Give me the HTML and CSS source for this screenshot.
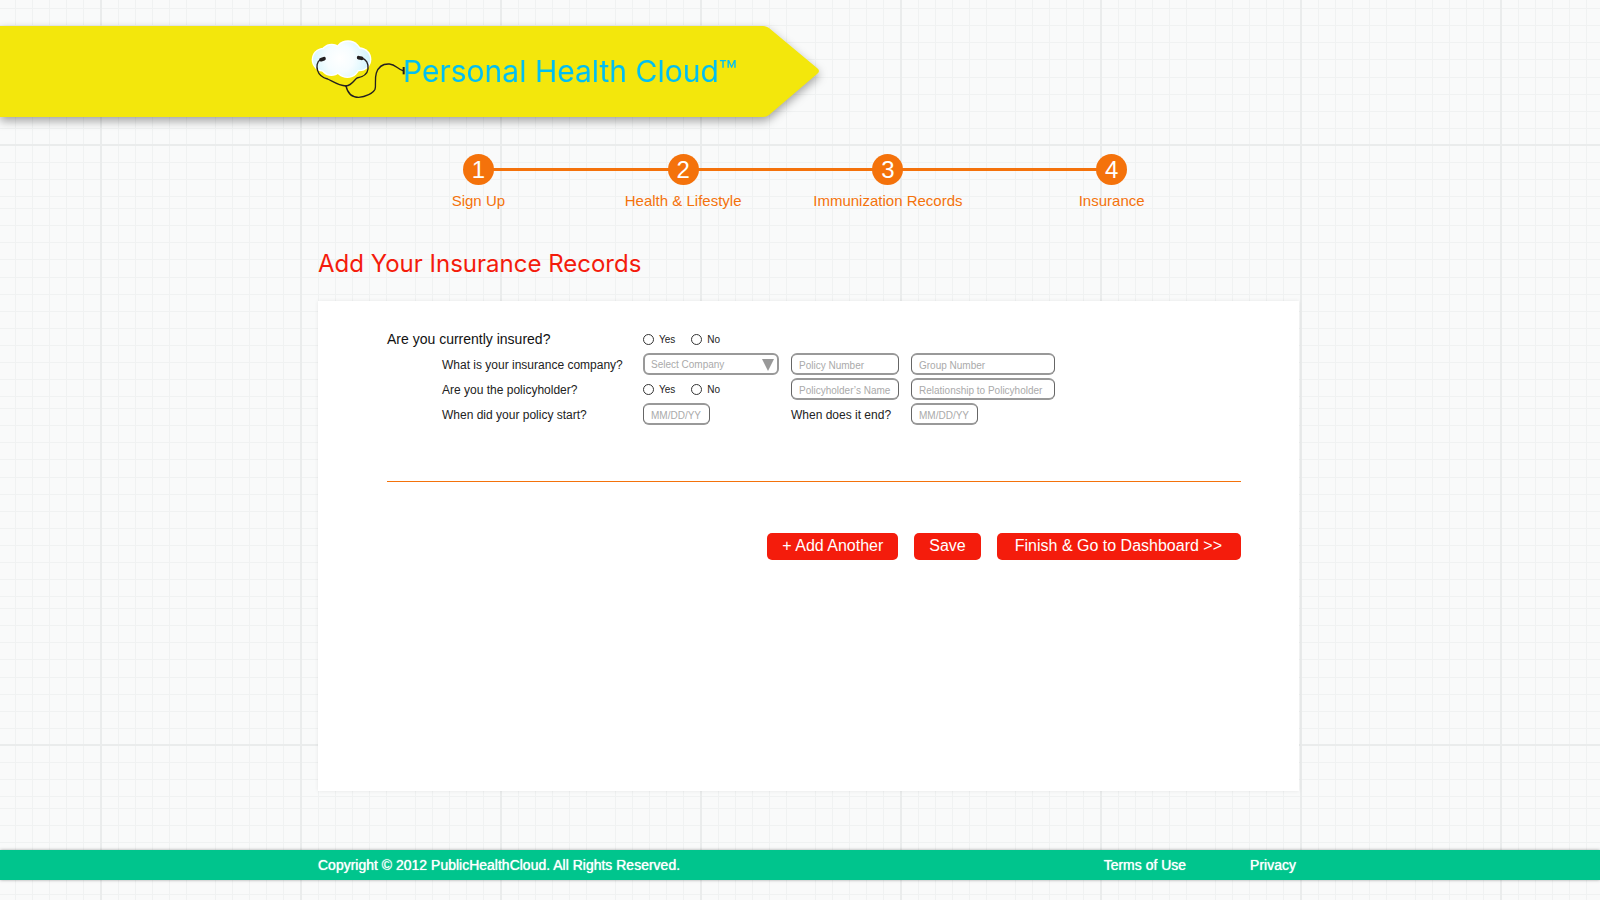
FILE: index.html
```html
<!DOCTYPE html>
<html lang="en">
<head>
<meta charset="utf-8">
<title>Personal Health Cloud</title>
<link rel="stylesheet" href="styles.css">
</head>
<body>
<header class="banner">
  <div class="banner-body">
    <svg class="logo" viewBox="60 54 279 186" aria-hidden="true">
      <defs>
        <radialGradient id="cloud" gradientUnits="userSpaceOnUse" cx="150" cy="115" r="90">
          <stop offset="0" stop-color="#fff"/>
          <stop offset="0.45" stop-color="#f6fdff"/>
          <stop offset="1" stop-color="#d2f4fc"/>
        </radialGradient>
      </defs>
      <g fill="#fff">
        <circle cx="101" cy="119" r="36"/><circle cx="125" cy="106" r="35"/><circle cx="174" cy="103" r="42"/><circle cx="208" cy="118" r="36"/><circle cx="124" cy="134" r="34"/><circle cx="172" cy="135" r="39"/>
      </g>
      <g fill="url(#cloud)">
        <circle cx="101" cy="119" r="32"/><circle cx="125" cy="106" r="31"/><circle cx="174" cy="103" r="38"/><circle cx="208" cy="118" r="32"/><circle cx="124" cy="134" r="30"/><circle cx="172" cy="135" r="35"/>
      </g>
      <g fill="none" stroke="#231f20" stroke-width="4" stroke-linecap="round">
        <path d="M92 119C80 124 79 140 83 152C87 166 97 173 113 177C128 184 146 197 168 198"/>
        <path d="M214 114C229 117 236 131 234 147C232 163 219 171 201 174C192 180 186 196 168 198"/>
        <path d="M168 198C172 216 182 232 206 232C226 231 250 220 255 208C259 196 253 178 259 159C265 141 280 131 298 132C317 133 323 148 339 152"/>
        <path d="M93 119L102 116M206 113L215 115" stroke-width="11"/>
        <path d="M341 141V163" stroke-width="6" stroke-linecap="butt"/>
      </g>
    </svg>
    <span class="brand">Personal Health Cloud™</span>
  </div>
  <svg class="banner-tip" viewBox="0 0 56 91" aria-hidden="true"><path d="M0 0C3 0 4 1 6 2L54 42Q58 45 54 48L6 89C4 90 3 91 0 91Z" fill="#f3e70c"/></svg>
</header>
<main class="page">
  <ol class="steps">
    <li class="step"><span class="step-number">1</span><span class="step-name">Sign Up</span></li>
    <li class="step"><span class="step-number">2</span><span class="step-name">Health &amp; Lifestyle</span></li>
    <li class="step"><span class="step-number">3</span><span class="step-name">Immunization Records</span></li>
    <li class="step"><span class="step-number">4</span><span class="step-name">Insurance</span></li>
  </ol>
  <h1 class="title">Add Your Insurance Records</h1>
  <form class="panel">
    <div class="fields">
      <span class="question" id="q-insured">Are you currently insured?</span>
      <div class="choices" role="radiogroup" aria-labelledby="q-insured">
        <label class="choice"><input class="radio" type="radio" name="insured">Yes</label>
        <label class="choice"><input class="radio" type="radio" name="insured">No</label>
      </div>
      <label class="sub" for="company">What is your insurance company?</label>
      <div class="select-wrap">
        <select class="control select" id="company"><option>Select Company</option></select>
        <svg class="arrow" viewBox="0 0 12 12" aria-hidden="true"><path d="M0 0H12L6 12Z" fill="#999"/></svg>
      </div>
      <input class="control" type="text" placeholder="Policy Number" aria-label="Policy Number">
      <input class="control" type="text" placeholder="Group Number" aria-label="Group Number">
      <span class="sub" id="q-holder">Are you the policyholder?</span>
      <div class="choices" role="radiogroup" aria-labelledby="q-holder">
        <label class="choice"><input class="radio" type="radio" name="holder">Yes</label>
        <label class="choice"><input class="radio" type="radio" name="holder">No</label>
      </div>
      <input class="control" type="text" placeholder="Policyholder’s Name" aria-label="Policyholder’s Name">
      <input class="control" type="text" placeholder="Relationship to Policyholder" aria-label="Relationship to Policyholder">
      <label class="sub" for="start">When did your policy start?</label>
      <input class="control date" id="start" type="text" placeholder="MM/DD/YY">
      <label class="end-label" for="end">When does it end?</label>
      <input class="control date" id="end" type="text" placeholder="MM/DD/YY">
    </div>
    <hr class="divider">
    <div class="actions">
      <button class="button" type="button">+ Add Another</button>
      <button class="button" type="button">Save</button>
      <button class="button wide" type="submit">Finish &amp; Go to Dashboard &gt;&gt;</button>
    </div>
  </form>
</main>
<footer class="footer">
  <span>Copyright © 2012 PublicHealthCloud. All Rights Reserved.</span>
  <nav class="footer-links"><a href="#">Terms of Use</a><a href="#">Privacy</a></nav>
</footer>
</body>
</html>
```
FILE: styles.css
```css
:root {
  --left: max(16px, calc(50% - 482px));
  --right: max(16px, calc(50% - 499px));
  --minor: #f0f2f2;
  --major: #eaecec;
}

* { box-sizing: border-box; }

body {
  margin: 0;
  min-height: 100vh;
  padding: 26px 0 20px;
  display: flex;
  flex-direction: column;
  font-family: "Liberation Sans", Arial, sans-serif;
  color: #222;
  background-color: #f9fafa;
  background-image:
    linear-gradient(90deg, transparent 100px, var(--major) 100px 102px, transparent 102px),
    linear-gradient(transparent 144px, var(--major) 144px 146px, transparent 146px 345px, var(--minor) 345px 346px, transparent 346px 545px, var(--minor) 545px 546px, transparent 546px),
    linear-gradient(90deg, transparent 15px, var(--minor) 15px 16px, transparent 16px 32px, var(--minor) 32px 33px, transparent 33px 49px, var(--minor) 49px 50px, transparent 50px 66px, var(--minor) 66px 67px, transparent 67px 83px, var(--minor) 83px 84px, transparent 84px 118px, var(--minor) 118px 119px, transparent 119px 135px, var(--minor) 135px 136px, transparent 136px 152px, var(--minor) 152px 153px, transparent 153px 169px, var(--minor) 169px 170px, transparent 170px 186px, var(--minor) 186px 187px, transparent 187px),
    linear-gradient(transparent 8px, var(--minor) 8px 9px, transparent 9px 25px, var(--minor) 25px 26px, transparent 26px 42px, var(--minor) 42px 43px, transparent 43px 59px, var(--minor) 59px 60px, transparent 60px 77px, var(--minor) 77px 78px, transparent 78px 94px, var(--minor) 94px 95px, transparent 95px 111px, var(--minor) 111px 112px, transparent 112px 128px, var(--minor) 128px 129px, transparent 129px 162px, var(--minor) 162px 163px, transparent 163px 179px, var(--minor) 179px 180px, transparent 180px 196px, var(--minor) 196px 197px, transparent 197px);
  background-size: 200px 200px, 200px 600px, 200px 200px, 200px 200px;
}

.banner {
  display: flex;
  filter: drop-shadow(0 4px 5px rgba(0, 0, 0, 0.35));
}

.banner-body {
  display: flex;
  width: calc(50% - 37px);
  min-width: 450px;
  height: 91px;
  padding-top: 12px;
  padding-left: calc(50vw - 490px);
  background: #f3e70c;
}

.banner-tip { width: 56px; height: 91px; }

.logo {
  flex: none;
  width: 93px;
  height: 62px;
  overflow: visible;
}

.brand {
  position: relative;
  font: 30px/66px Inter, sans-serif;
  color: #00bff3;
  white-space: nowrap;
}

.page {
  display: flex;
  flex: 1;
  flex-direction: column;
  padding: 37px var(--right) 0 var(--left);
}

.steps {
  display: grid;
  grid-template-columns: 205fr 205fr 205fr 243fr;
  margin: 0 66px 0 58px;
  padding: 0;
  list-style: none;
  color: #f4720b;
}

.step {
  position: relative;
  display: flex;
  flex-direction: column;
  align-items: center;
  gap: 6px;
}

.step::before {
  content: "";
  position: absolute;
  top: 14px;
  left: 0;
  right: 0;
  height: 3px;
  background: #f4720b;
}

.step:first-child::before { left: 50%; }
.step:last-child::before { right: 50%; }

.step-number {
  position: relative;
  width: 31px;
  height: 31px;
  border-radius: 50%;
  background: #f4720b;
  color: #fff;
  font-size: 24px;
  line-height: 31px;
  text-align: center;
}

.step-name {
  font-size: 15px;
  line-height: 20px;
  white-space: nowrap;
}

.title {
  margin: 38px 0 22px;
  font: 24px/30px Inter, sans-serif;
  color: #f41c0c;
}

.panel {
  min-height: 490px;
  padding: 27px 58px 40px 69px;
  background: #fff;
  box-shadow: 0 0 4px rgba(0, 0, 0, 0.08);
}

.fields {
  display: grid;
  grid-template-columns: 244px 136px 108px 144px;
  grid-auto-rows: 22px;
  gap: 3px 12px;
  align-items: center;
}

.question {
  font-size: 14px;
  color: #111;
}

.sub {
  padding-top: 1px;
  padding-left: 55px;
  font-size: 12px;
  white-space: nowrap;
}

.end-label {
  padding-top: 1px;
  font-size: 12px;
  white-space: nowrap;
}

.choices {
  display: flex;
  gap: 16px;
}

.choices:nth-child(2) { grid-column: 2 / -1; }

.choice {
  display: flex;
  align-items: center;
  gap: 5px;
  font-size: 10px;
}

.radio {
  appearance: none;
  width: 11px;
  height: 11px;
  margin: 0;
  border: 1px solid #333;
  border-radius: 50%;
}

.radio:checked { background: #333; }

.control {
  width: 100%;
  height: 22px;
  padding: 2px 7px 0;
  border: 2px solid #999;
  border-right: 1px solid #666;
  border-left: 1px solid #666;
  border-radius: 6px;
  background: #fff;
  font: 10px "Liberation Sans", Arial, sans-serif;
  color: #222;
}

.control::placeholder { color: #aaa; opacity: 1; }

.date { width: 67px; }

.select-wrap { position: relative; height: 22px; }

.select {
  appearance: none;
  padding: 0 6px;
  border: 2px solid #999;
  color: #aaa;
}

.arrow {
  position: absolute;
  top: 6px;
  right: 5px;
  width: 12px;
  height: 12px;
  pointer-events: none;
}

.divider {
  width: 100%;
  height: 1px;
  margin: 56px 0 51px;
  border: 0;
  background: #f4720b;
}

.actions {
  display: flex;
  justify-content: flex-end;
  gap: 16px;
}

.button {
  height: 27px;
  padding: 0 15px 2px;
  border: 0;
  border-radius: 5px;
  background: #f41c0c;
  color: #fff;
  font: 16px "Liberation Sans", Arial, sans-serif;
}

.wide { padding: 0 19px 2px 18px; }

.footer {
  display: flex;
  justify-content: space-between;
  padding: 0 var(--right) 0 var(--left);
  background: #00c58d;
  box-shadow: 0 0 3px rgba(0, 0, 0, 0.35);
  color: #fff;
  font-size: 14px;
  line-height: 30px;
  text-shadow: 0 0 1px #fff;
}

.footer-links { display: flex; gap: 64px; padding-right: 3px; }
.footer-links a { color: inherit; text-decoration: none; }
```
